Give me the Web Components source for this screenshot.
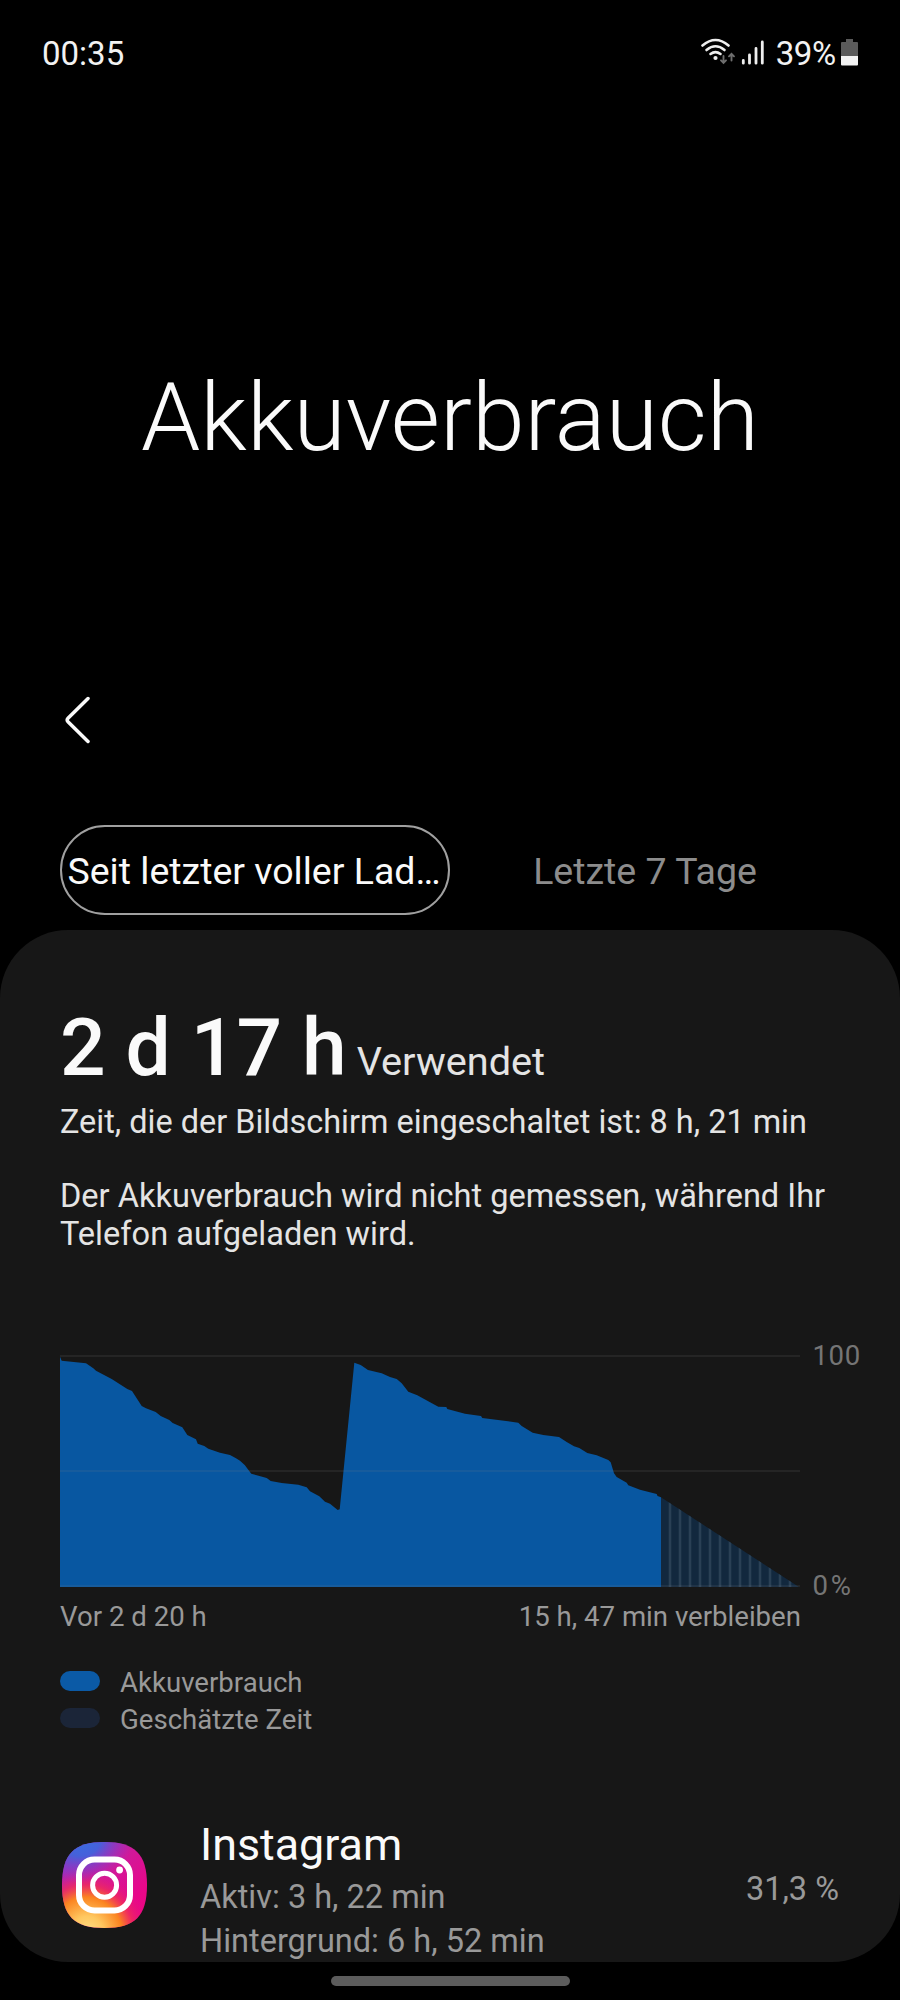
<!DOCTYPE html>
<html lang="de">
<head>
<meta charset="utf-8">
<title>Akkuverbrauch</title>
<style>
  body {
    margin: 0;
    background: #000;
    color: #fafafa;
    font-family: Roboto, sans-serif;
  }
</style>
</head>
<body>
<battery-screen></battery-screen>

<script>
class StatusBar extends HTMLElement {
  constructor() {
    super();
    this.shadow = this.attachShadow({ mode: "open" });
  }

  connectedCallback() {
    this.shadow.innerHTML =
      `<style>
        :host {
          display: flex;
          justify-content: space-between;
          align-items: center;
          box-sizing: border-box;
          height: 106px;
          padding: 2px 42px 0 42px;
          font-size: 33px;
          line-height: 40px;
          color: #f2f2f2;
        }
        .right { display: flex; align-items: center; }
        svg { display: block; margin-bottom: 4px; }
        .level { margin: 0 5px 0 12px; letter-spacing: -0.3px; }
      </style>
      <span><slot name="time"></slot></span>
      <div class="right">
        <svg width="64" height="28" viewBox="0 0 64 28" fill="none" stroke-linecap="round">
          <g stroke="#eee" stroke-width="2.6">
            <path d="M2.5 7.5Q15.5 -3.5 28.5 7.5"/>
            <path d="M6.5 12Q15.5 4.5 24.5 12"/>
            <path d="M10.5 16Q15.5 12.2 20.5 16"/>
          </g>
          <circle cx="15.5" cy="20" r="2.1" fill="#eee"/>
          <g stroke="#6e6e6e" stroke-width="1.9">
            <path d="M23.5 18v6.5M21 22.3l2.5 2.5 2.5-2.5"/>
            <path d="M31.5 22.5v-6.5M29 18.3l2.5-2.5 2.5 2.5"/>
          </g>
          <g stroke="#eee" stroke-width="2.8">
            <path d="M43.3 22.5v2.7M49.5 17v8.2M56 10.5v14.7M62.3 4v21.2"/>
          </g>
        </svg>
        <span class="level"><slot name="level"></slot></span>
        <svg width="17" height="27" viewBox="0 0 17 27">
          <path fill="#5a5a5a" d="M5 0h7v3h4q1 0 1 1v13H0V4q0-1 1-1h4z"/>
          <path fill="#f2f2f2" d="M0 17h17v8.5q0 1-1 1H1q-1 0-1-1z"/>
        </svg>
      </div>`;
  }
}

class PageHeader extends HTMLElement {
  constructor() {
    super();
    this.shadow = this.attachShadow({ mode: "open" });
  }

  connectedCallback() {
    this.shadow.innerHTML =
      `<style>
        :host { display: block; padding-top: 256px; }
        h1 {
          margin: 0;
          text-align: center;
          font-size: 95px;
          line-height: 112px;
          font-weight: 300;
        }
        svg { display: block; margin: 222px 0 0 62px; }
      </style>
      <h1><slot></slot></h1>
      <svg width="28" height="48" viewBox="0 0 28 48" fill="none" stroke="#fafafa" stroke-width="3.5" stroke-linecap="round">
        <path d="M26 2.500L6 22.300Q4.400 24 6 25.700L26 45.500"/>
      </svg>`;
  }
}

class TabItem extends HTMLElement {
  constructor() {
    super();
    this.shadow = this.attachShadow({ mode: "open" });
  }

  connectedCallback() {
    this.shadow.innerHTML =
      `<style>
        :host {
          display: flex;
          align-items: center;
          justify-content: center;
          box-sizing: border-box;
          height: 90px;
          padding-top: 1px;
          white-space: nowrap;
          font-size: 37.5px;
          color: #8c8c8c;
        }
        :host([selected]) {
          padding-right: 2px;
          border: 2px solid #a0a0a0;
          border-radius: 45px;
          color: #fafafa;
        }
      </style>
      <slot></slot>`;
  }
}

class UsageSummary extends HTMLElement {
  constructor() {
    super();
    this.shadow = this.attachShadow({ mode: "open" });
  }

  connectedCallback() {
    this.shadow.innerHTML =
      `<style>
        :host { display: block; font-size: 32.45px; line-height: 38.3px; color: #e4e4e4; }
        .total { display: flex; align-items: baseline; gap: 10px; height: 94px; font-size: 39.7px; line-height: 94px; white-space: nowrap; }
        .total b { font-size: 80.3px; font-weight: 500; color: #fafafa; }
        p { margin: 8px 0 0; white-space: nowrap; }
        p.note { margin-top: 35.5px; margin-right: -20px; font-size: 32.55px; white-space: normal; }
      </style>
      <div class="total"><b><slot name="total"></slot></b><slot name="label"></slot></div>
      <p><slot name="screen"></slot></p>
      <p class="note"><slot name="note"></slot></p>`;
  }
}

class BatteryChart extends HTMLElement {
  constructor() {
    super();
    this.shadow = this.attachShadow({ mode: "open" });
    // x/y pairs of the discharge curve, in plot pixels
    this._points = [
      0,2.7, 1.7,6.7, 26,9.3, 33.3,14.3, 36,16.7, 51.7,25, 67.3,35, 72,37, 81.7,52, 86,54.3,
      95.7,58, 100.7,62, 109.3,66, 112.7,69, 122.3,73.3, 127.3,81, 136,85.3, 137.7,89.7,
      144.3,92, 148.3,94.7, 160,98.7, 170,101, 176,104.3, 180,106.7, 184.7,111, 191.3,119.7,
      206.7,124, 210.7,127, 221.7,129, 238.3,130.7, 246.7,133.3, 250,137.3, 259.3,142.3,
      265,147.7, 270,149.7, 277.7,156, 279.7,155.3, 294.3,8.7, 300.7,11, 308,16, 321.7,19.3,
      330,23, 336.7,25, 341.7,29.3, 348.3,37.7, 357.3,41.3, 378.3,52.7, 386.3,53, 387.3,55,
      405,59.7, 421,62, 422.3,64, 458.3,68.7, 461.7,72, 472.7,78.7, 483.3,81, 499,83,
      506.7,88, 514,92.3, 519.3,94, 527.3,99, 536.7,101.3, 548.3,106, 550.7,108.3,
      554,119.3, 556.7,123, 566.7,128.7, 568.3,131.3, 580,135.7, 596.7,140, 597.5,142, 601,143.3
    ];
  }

  connectedCallback() {
    var stripes = "";
    for (var x = 610; x < 740; x += 10) {
      stripes += `M${x} 130V233`;
    }

    this.shadow.innerHTML =
      `<style>
        :host { display: block; color: #999; font-size: 27.6px; line-height: 32px; }
        .plot { display: flex; height: 234px; }
        svg { display: block; flex: none; }
        .scale {
          display: flex;
          flex-direction: column;
          justify-content: space-between;
          margin-left: 12.5px;
          line-height: 4px;
          color: #757575;
          white-space: nowrap;
        }
        .max { letter-spacing: .6px; }
        .min { word-spacing: -4px; }
        .axis { display: flex; justify-content: space-between; width: 741px; margin-top: 13px; }
      </style>
      <div class="plot">
        <svg width="740" height="234" viewBox="0 0 740 234">
          <clipPath id="rest"><path d="M601 143.3L739 233H601z"/></clipPath>
          <path fill="#0857a1" d="M0 233L${this._points.join(" ")}L601 233z"/>
          <path fill="#12283e" d="M601 143.3L739 233H601z"/>
          <path clip-path="url(#rest)" stroke="#2a4055" stroke-width="2.6" d="${stripes}"/>
          <path stroke="#808080" stroke-opacity=".13" stroke-width="2" d="M0 2H740M0 117H740M0 232H740"/>
        </svg>
        <div class="scale">
          <span class="max"><slot name="max"></slot></span>
          <span class="min"><slot name="min"></slot></span>
        </div>
      </div>
      <div class="axis"><slot name="start"></slot><slot name="end"></slot></div>`;
  }
}

class LegendItem extends HTMLElement {
  constructor() {
    super();
    this.shadow = this.attachShadow({ mode: "open" });
  }

  connectedCallback() {
    this.shadow.innerHTML =
      `<style>
        :host { display: flex; align-items: center; gap: 20px; height: 37px; font-size: 27.6px; line-height: 37px; color: #999; }
        i { width: 40px; height: 20px; margin-bottom: 2px; border-radius: 10px; background: var(--swatch); }
      </style>
      <i></i><slot></slot>`;
  }
}

class AppUsage extends HTMLElement {
  constructor() {
    super();
    this.shadow = this.attachShadow({ mode: "open" });
  }

  connectedCallback() {
    this.shadow.innerHTML =
      `<style>
        :host { display: flex; height: 144px; color: #999; font-size: 32.5px; line-height: 44px; white-space: nowrap; }
        .icon { flex: none; width: 85px; margin: 24px 53px 0 2px; }
        .text { flex: 1; }
        h2 { margin: 0 0 4px; font-size: 44.8px; line-height: 53px; font-weight: 400; color: #fafafa; }
        .share { margin: 49px 1px 0 0; }
      </style>
      <div class="icon"><slot name="icon"></slot></div>
      <div class="text">
        <h2><slot name="name"></slot></h2>
        <div><slot name="active"></slot></div>
        <div><slot name="background"></slot></div>
      </div>
      <div class="share"><slot name="share"></slot></div>`;
  }
}

class InstagramIcon extends HTMLElement {
  constructor() {
    super();
    this.shadow = this.attachShadow({ mode: "open" });
  }

  connectedCallback() {
    this.shadow.innerHTML =
      `<style>
        :host { display: block; }
        svg { display: block; }
      </style>
      <svg width="85" height="86" viewBox="0 0 85 86">
        <defs>
          <linearGradient id="base" x1="0" y1="0" x2="1" y2="1">
            <stop offset="0" stop-color="#8a35cc"/>
            <stop offset=".45" stop-color="#cf1a9a"/>
            <stop offset=".75" stop-color="#e8078a"/>
            <stop offset="1" stop-color="#f0067a"/>
          </linearGradient>
          <radialGradient id="warm" gradientUnits="userSpaceOnUse" cx="0" cy="0" r="1" gradientTransform="matrix(60 20 -16 60 26 90)">
            <stop offset="0" stop-color="#ffdf85"/>
            <stop offset=".25" stop-color="#ffc860"/>
            <stop offset=".55" stop-color="#fb8420"/>
            <stop offset=".75" stop-color="#f02a5c" stop-opacity=".8"/>
            <stop offset="1" stop-color="#e0108c" stop-opacity="0"/>
          </radialGradient>
          <radialGradient id="cool" gradientUnits="userSpaceOnUse" cx="0" cy="0" r="1" gradientTransform="matrix(52 -8 4 40 20 0)">
            <stop offset="0" stop-color="#3a6cdf"/>
            <stop offset=".35" stop-color="#4660da"/>
            <stop offset="1" stop-color="#9a2fc4" stop-opacity="0"/>
          </radialGradient>
          <path id="shape" d="M42.5 0C73 0 85 12 85 43S73 86 42.5 86 0 74 0 43 12 0 42.5 0z"/>
        </defs>
        <use href="#shape" fill="url(#base)"/>
        <use href="#shape" fill="url(#warm)"/>
        <use href="#shape" fill="url(#cool)"/>
        <g fill="none" stroke="#fff">
          <rect x="17" y="17.5" width="51" height="51" rx="15.5" stroke-width="6"/>
          <circle cx="42.6" cy="43.3" r="12" stroke-width="5"/>
        </g>
        <circle cx="57.6" cy="28" r="3.4" fill="#fff"/>
      </svg>`;
  }
}

class BatteryScreen extends HTMLElement {
  constructor() {
    super();
    this.shadow = this.attachShadow({ mode: "open" });
  }

  connectedCallback() {
    this.shadow.innerHTML =
      `<style>
        :host { display: flex; flex-direction: column; width: 900px; height: 2000px; overflow: hidden; background: #000; }
        nav { display: grid; grid-template-columns: 390px 390px; margin: 81px 60px 15px; }
        .panel {
          box-sizing: border-box;
          height: 1032px;
          padding: 71px 60px 0;
          border-radius: 68px;
          background: #171717;
          overflow: hidden;
        }
        battery-chart { margin-top: 100.5px; }
        .legend { margin-top: 31px; }
        app-usage { margin-top: 80px; }
        .home { display: flex; flex: 1; align-items: center; justify-content: center; }
        .home i { width: 239px; height: 10px; border-radius: 5px; background: #5c5c5c; }
      </style>
      <status-bar>
        <span slot="time">00:35</span>
        <span slot="level">39%</span>
      </status-bar>
      <page-header>Akkuverbrauch</page-header>
      <nav>
        <tab-item selected>Seit letzter voller Lad…</tab-item>
        <tab-item>Letzte 7 Tage</tab-item>
      </nav>
      <div class="panel">
        <usage-summary>
          <span slot="total">2 d 17 h</span>
          <span slot="label">Verwendet</span>
          <span slot="screen">Zeit, die der Bildschirm eingeschaltet ist: 8 h, 21 min</span>
          <span slot="note">Der Akkuverbrauch wird nicht gemessen, während Ihr Telefon aufgeladen wird.</span>
        </usage-summary>
        <battery-chart>
          <span slot="max">100</span>
          <span slot="min">0 %</span>
          <span slot="start">Vor 2 d 20 h</span>
          <span slot="end">15 h, 47 min verbleiben</span>
        </battery-chart>
        <div class="legend">
          <legend-item style="--swatch:#0b5aa6">Akkuverbrauch</legend-item>
          <legend-item style="--swatch:#1b2538">Geschätzte Zeit</legend-item>
        </div>
        <app-usage>
          <instagram-icon slot="icon"></instagram-icon>
          <span slot="name">Instagram</span>
          <span slot="active">Aktiv: 3 h, 22 min</span>
          <span slot="background">Hintergrund: 6 h, 52 min</span>
          <span slot="share">31,3 %</span>
        </app-usage>
      </div>
      <div class="home"><i></i></div>`;
  }
}

customElements.define("status-bar", StatusBar);
customElements.define("page-header", PageHeader);
customElements.define("tab-item", TabItem);
customElements.define("usage-summary", UsageSummary);
customElements.define("battery-chart", BatteryChart);
customElements.define("legend-item", LegendItem);
customElements.define("app-usage", AppUsage);
customElements.define("instagram-icon", InstagramIcon);
customElements.define("battery-screen", BatteryScreen);
</script>
</body>
</html>
